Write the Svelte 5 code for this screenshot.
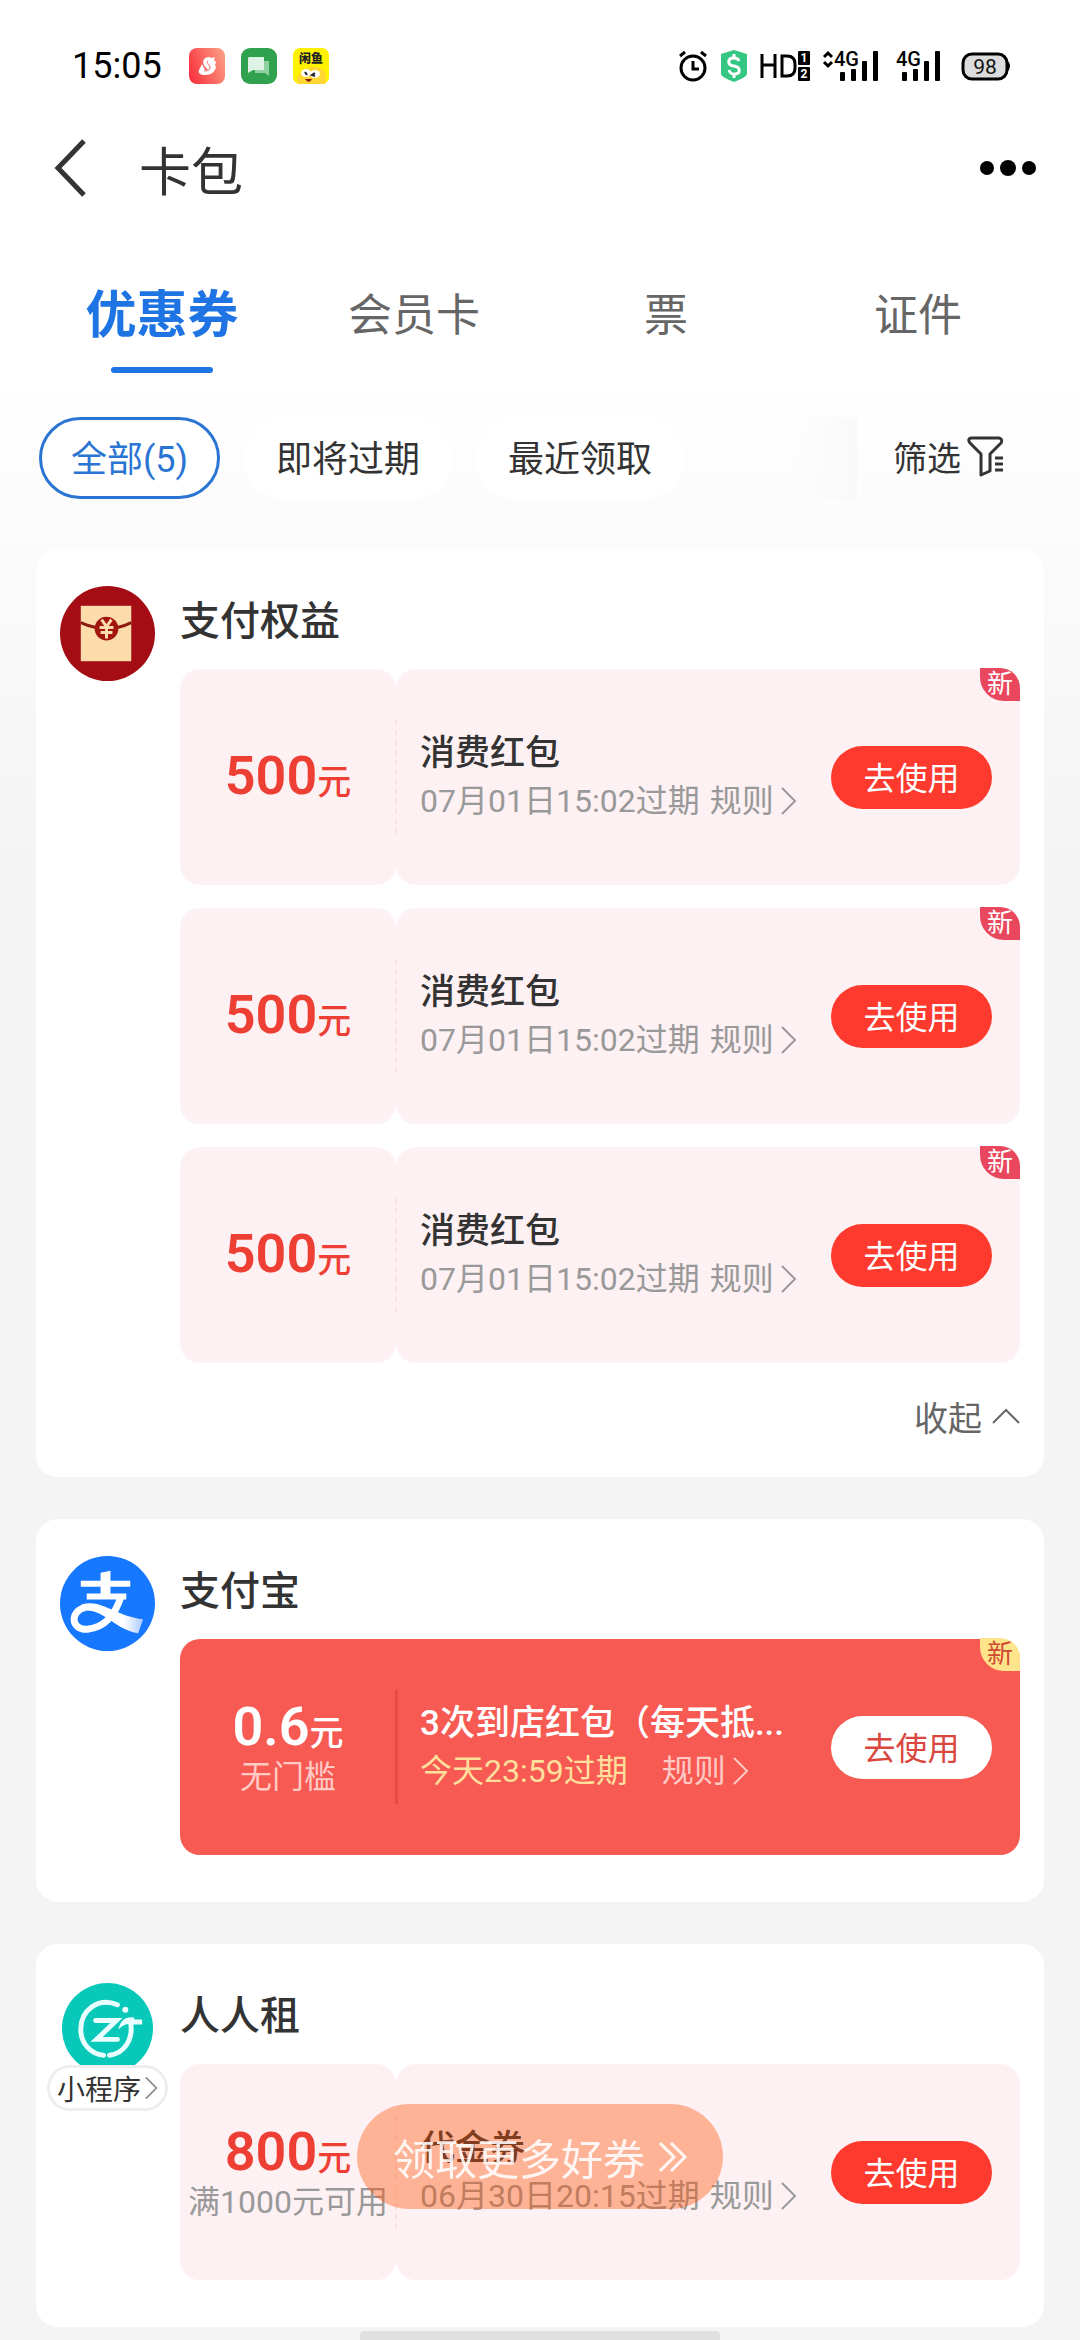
<script>
  const tabs = ['优惠券', '会员卡', '票', '证件'];
  const filters = ['全部(5)', '即将过期', '最近领取'];
  let activeTab = $state(0);
  let activeFilter = $state(0);

  const redPacket = {
    amount: '500',
    title: '消费红包',
    date: '07月01日15:02过期',
    isNew: true
  };

  const groups = [
    { icon: 'packet', name: '支付权益', fold: true, coupons: [redPacket, redPacket, redPacket] },
    {
      icon: 'alipay',
      name: '支付宝',
      coupons: [
        {
          amount: '0.6',
          limit: '无门槛',
          title: '3次到店红包（每天抵...',
          date: '今天23:59过期',
          isNew: true,
          solid: true
        }
      ]
    },
    {
      icon: 'rent',
      name: '人人租',
      mini: true,
      coupons: [{ amount: '800', limit: '满1000元可用', title: '代金券', date: '06月30日20:15过期' }]
    }
  ];
</script>

{#snippet signal(arrows)}
  <svg class="signal" width={arrows ? 56 : 44} height="36" viewBox={arrows ? '0 0 56 36' : '12 0 44 36'} aria-hidden="true">
    {#if arrows}
      <path d="M2 9l4-4 4 4M2 14l4 4 4-4" fill="none" stroke="#000" stroke-width="3" />
    {/if}
    <text x="12" y="18" font-size="20" font-weight="500" fill="#000">4G</text>
    <g fill="#000">
      <rect x="18" y="24" width="5" height="9" rx="1" />
      <rect x="29" y="21" width="5" height="12" rx="1" />
      <rect x="40" y="13" width="5" height="20" rx="1" />
      <rect x="51" y="3" width="5" height="30" rx="1" />
    </g>
  </svg>
{/snippet}

{#snippet avatar(kind)}
  <svg class="avatar" viewBox="0 0 96 96" aria-hidden="true">
    {#if kind === 'packet'}
      <circle cx="48" cy="48" r="48" fill="#a50d14" />
      <rect x="21" y="20" width="51" height="56" fill="#fbdcaa" />
      <path d="M21 37q27 12 51 0" fill="none" stroke="#8c1a10" stroke-width="3" />
      <circle cx="47" cy="43" r="12" fill="#a3160f" />
      <path d="M42 34l5 7 5-7M47 41v12M40 42h14M41 47h12" fill="none" stroke="#fbdcaa" stroke-width="3" />
    {:else if kind === 'alipay'}
      <defs>
        <linearGradient id="ribbon" x1="0" x2="1" y1="0" y2="0">
          <stop offset="0" stop-color="#fff" />
          <stop offset="0.7" stop-color="#fff" />
          <stop offset="1" stop-color="#a9cbff" />
        </linearGradient>
      </defs>
      <circle cx="48" cy="48" r="48" fill="#1677ff" />
      <path d="M41 17l10-2v25H41zM21 25h50v6H21zM27 38h40v6H27z" fill="#fff" />
      <path d="M62 40c-4 13-13 32-34 34-18 1-18-19-2-22" fill="none" stroke="#fff" stroke-width="7" />
      <path d="M22 49c20-6 34 12 62 15l-5 14C54 74 42 50 20 56z" fill="url(#ribbon)" />
    {:else}
      <circle cx="48" cy="48" r="46" fill="#07c8b9" />
      <g fill="none" stroke="#e9ffff" stroke-width="5" stroke-linecap="round" stroke-linejoin="round">
        <path d="M58 24c-20-8-37 6-37 25 0 14 10 25 23 26" />
        <path d="M50 75c15-2 25-16 21-35" />
        <path d="M36 40h21L37 59h21" stroke-linejoin="miter" />
      </g>
      <path d="M59 49q3-14 16-12v2h8v5h-9q-8-2-15 5z" fill="#e9ffff" />
      <circle cx="66" cy="29" r="3" fill="#e9ffff" />
    {/if}
  </svg>
{/snippet}

{#snippet chevron()}
  <svg class="chevron" width="16" height="28" viewBox="0 0 16 28" aria-hidden="true">
    <path d="M1 1l13 13L1 27" fill="none" stroke="currentColor" stroke-width="2" />
  </svg>
{/snippet}

<div class="page">
  <div class="status">
    <span class="time">15:05</span>
    <div class="apps">
      <svg width="36" height="36" viewBox="0 0 36 36" aria-hidden="true">
        <defs>
          <linearGradient id="swan" x1="0" x2="1" y1="0.7" y2="0.3">
            <stop offset="0" stop-color="#f93440" />
            <stop offset="1" stop-color="#fa9a80" />
          </linearGradient>
        </defs>
        <rect width="36" height="36" rx="8" fill="url(#swan)" />
        <path d="M17 20c-5-5-3-11 3-11l3 1 3-1-1 3 2 2-1 3 1 2c-1 5-5 8-11 8-5 0-7-2-6-5l3-6 3 6c3 1 4 0 1-2z" fill="#fff" />
        <path d="M19 13c-3 2 3 4 2 7s-4 3-6 3" fill="none" stroke="#f9666a" stroke-width="1" />
      </svg>
      <svg width="36" height="36" viewBox="0 0 36 36" aria-hidden="true">
        <rect width="36" height="36" rx="9" fill="#2fa14f" />
        <path d="M14 13h14v15l-4-3H14z" fill="#8fd0a0" />
        <path d="M8 9h15v13H12l-5 3V10z" fill="#dff3e4" />
      </svg>
      <svg width="36" height="36" viewBox="0 0 36 36" aria-hidden="true">
        <rect width="36" height="36" rx="7" fill="#fff200" />
        <path d="M6 36c-4-4-1-10 3-11 3-6 12-7 17-5 7 1 8 9 6 16z" fill="#ffd633" />
        <ellipse cx="13" cy="25" rx="5" ry="4" fill="#fff" />
        <ellipse cx="22" cy="26" rx="5" ry="4" fill="#fff" />
        <path d="M12 24l2 3M22 25l-3 2 3 1" stroke="#222" stroke-width="2" fill="none" />
        <path d="M12 31h7q-3 6-7 0z" fill="#8d1c12" />
        <text x="6" y="15" font-size="12" font-weight="900" fill="#222">闲鱼</text>
      </svg>
    </div>
    <div class="system">
      <svg width="30" height="34" viewBox="0 0 30 34" aria-hidden="true">
        <circle cx="15" cy="19" r="12" fill="none" stroke="#000" stroke-width="3" />
        <path d="M15 12v8h6M2 7l5-4M28 7l-5-4" fill="none" stroke="#000" stroke-width="3" />
      </svg>
      <svg width="28" height="34" viewBox="0 0 28 34" aria-hidden="true">
        <path d="M14 1l13 4v20q0 3-13 8Q1 28 1 25V5z" fill="#34c682" />
        <path d="M19 12q-1-3-5-3c-7 0-7 7 0 8s7 8 0 8q-4 0-5-4M14 5v4M14 25v4" fill="none" stroke="#fff" stroke-width="3" />
      </svg>
      <svg width="50" height="34" viewBox="0 0 50 34" aria-hidden="true">
        <path d="M2 5v24M15 5v24M2 16h13M22 7h5q8 0 8 8v4q0 8-8 8h-5z" fill="none" stroke="#000" stroke-width="3" />
        <rect x="38" y="2" width="12" height="14" rx="1" fill="#000" />
        <rect x="38" y="18" width="12" height="14" rx="1" fill="#000" />
        <text x="44" y="13" font-size="12" font-weight="700" text-anchor="middle" fill="#fff">1</text>
        <text x="44" y="29" font-size="12" font-weight="700" text-anchor="middle" fill="#fff">2</text>
      </svg>
      <div class="signals">
        {@render signal(true)}
        {@render signal(false)}
      </div>
      <svg width="52" height="34" viewBox="0 0 52 34" aria-hidden="true">
        <rect x="3" y="5" width="44" height="25" rx="9" fill="#dcdcdc" stroke="#000" stroke-width="3" />
        <path d="M48 12q4 5 0 10z" fill="#000" />
        <text x="25" y="25" font-size="21" text-anchor="middle" fill="#111">98</text>
      </svg>
    </div>
  </div>

  <header>
    <button class="plain" aria-label="返回">
      <svg width="40" height="60" viewBox="0 0 40 60" aria-hidden="true">
        <path d="M36 3L10 30l26 27" fill="none" stroke="#333" stroke-width="5" />
      </svg>
    </button>
    <h1>卡包</h1>
    <button class="plain more" aria-label="更多">
      <svg width="56" height="20" viewBox="0 0 56 20" aria-hidden="true">
        <circle cx="7" cy="10" r="7" /><circle cx="28" cy="10" r="8" /><circle cx="49" cy="10" r="7" />
      </svg>
    </button>
  </header>

  <nav class="tabs">
    {#each tabs as tab, i}
      <button class="plain tab" class:active={activeTab === i} onclick={() => (activeTab = i)}>{tab}</button>
    {/each}
  </nav>

  <div class="filters">
    {#each filters as filter, i}
      <button class="pill" class:active={activeFilter === i} onclick={() => (activeFilter = i)}>{filter}</button>
    {/each}
    <span class="fade"></span>
    <button class="plain sift">
      筛选
      <svg width="38" height="42" viewBox="0 0 38 42" aria-hidden="true">
        <path d="M4 2h28q4 1 2 5L23 18v17l-9 4V18L3 7Q0 3 4 2z" fill="none" stroke="#333" stroke-width="3" stroke-linejoin="round" />
        <path d="M28 22h8M28 28h8M28 34h8" stroke="#333" stroke-width="3" />
      </svg>
    </button>
  </div>

  <main>
    {#each groups as group}
      <section class="card">
        <div class="brand">
          {@render avatar(group.icon)}
          {#if group.mini}
            <button class="mini">小程序{@render chevron()}</button>
          {/if}
        </div>
        <div class="body">
          <h2>{group.name}</h2>
          <div class="list">
            {#each group.coupons as coupon}
              <article class="coupon" class:solid={coupon.solid}>
                <div class="value">
                  <p class="amount">{coupon.amount}<small>元</small></p>
                  {#if coupon.limit}<p class="limit">{coupon.limit}</p>{/if}
                </div>
                <div class="detail">
                  <div class="info">
                    <h3>{coupon.title}</h3>
                    <p class="meta">
                      <span class="date">{coupon.date}</span>
                      <button class="plain rule">规则{@render chevron()}</button>
                    </p>
                  </div>
                  <button class="use">去使用</button>
                </div>
                {#if coupon.isNew}<span class="badge">新</span>{/if}
              </article>
            {/each}
          </div>
          {#if group.fold}
            <button class="plain fold">
              收起
              <svg width="28" height="16" viewBox="0 0 28 16" aria-hidden="true">
                <path d="M1 15L14 2l13 13" fill="none" stroke="#666" stroke-width="2" />
              </svg>
            </button>
          {/if}
        </div>
      </section>
    {/each}
  </main>

  <button class="float">
    领取更多好券
    <svg width="28" height="30" viewBox="0 0 28 30" aria-hidden="true">
      <path d="M1 1l14 14L1 29M12 1l14 14-14 14" fill="none" stroke="currentColor" stroke-width="3" />
    </svg>
  </button>
  <div class="home"></div>
</div>

<style>
  :global(body) {
    margin: 0;
    background: #f4f4f4;
  }
  .page {
    min-height: 100vh;
    box-sizing: border-box;
    padding-bottom: 13px;
    overflow: hidden;
    background: linear-gradient(#fff 0, #fff 380px, #f4f4f4 860px);
    color: #333;
    font-family: Roboto, 'Noto Sans CJK SC', sans-serif;
  }
  h1, h2, h3, p {
    margin: 0;
    font-weight: 400;
  }
  button {
    padding: 0;
    border: 0;
    font-family: inherit;
    color: inherit;
    cursor: pointer;
  }
  svg {
    display: block;
    flex: none;
  }
  .plain {
    display: flex;
    align-items: center;
    background: none;
  }

  .status {
    display: flex;
    align-items: center;
    height: 60px;
    padding: 36px 68px 0 72px;
    color: #000;
  }
  .time {
    font-size: 36px;
  }
  .apps {
    display: flex;
    gap: 16px;
    margin-left: 27px;
  }
  .system {
    display: flex;
    align-items: center;
    gap: 12px;
    margin-left: auto;
  }
  .signals {
    display: flex;
    gap: 18px;
    padding-right: 8px;
  }

  header {
    display: flex;
    align-items: center;
    height: 144px;
    padding: 0 44px 0 48px;
  }
  h1 {
    margin-left: 51px;
    font-size: 52px;
  }
  .more {
    margin-left: auto;
  }

  .tabs {
    display: grid;
    grid-template-columns: repeat(4, 1fr);
    padding: 39px 36px 0;
  }
  .tab {
    flex-direction: column;
    gap: 14px;
    font-size: 44px;
    line-height: 74px;
    color: #666;
  }
  .tab::after {
    content: '';
    width: 102px;
    height: 6px;
    border-radius: 3px;
  }
  .tab.active {
    font-size: 51px;
    font-weight: 700;
    color: #1f74e4;
  }
  .tab.active::after {
    background: #1f74e4;
  }

  .filters {
    display: flex;
    align-items: stretch;
    gap: 24px;
    height: 82px;
    margin: 44px 75px 50px 39px;
  }
  .pill {
    padding: 0 29px 4px;
    border: 3px solid #fff;
    border-radius: 41px;
    background: #fff;
    font-size: 36px;
  }
  .pill.active {
    border-color: #2a75d3;
    color: #2a75d3;
  }
  .fade {
    width: 66px;
    margin-left: auto;
    background: linear-gradient(to right, #fdfdfd00, #f9f9f9);
  }
  .sift {
    gap: 6px;
    margin-left: 12px;
    padding-bottom: 3px;
    font-size: 34px;
  }

  main {
    display: flex;
    flex-direction: column;
    gap: 42px;
    padding: 0 36px;
  }
  .card {
    display: flex;
    gap: 12px;
    padding: 0 24px 47px 11px;
    border-radius: 22px;
    background: #fff;
  }
  .brand {
    display: flex;
    flex: none;
    flex-direction: column;
    align-items: center;
    width: 121px;
    padding-top: 37px;
  }
  .avatar {
    width: 95px;
    height: 95px;
  }
  .mini {
    display: flex;
    align-items: center;
    gap: 4px;
    height: 46px;
    margin-top: -11px;
    padding: 0 7px;
    border: 3px solid #eee;
    border-radius: 23px;
    background: #fff;
    box-sizing: border-box;
    font-size: 28px;
    white-space: nowrap;
    z-index: 1;
  }
  .mini .chevron {
    width: 13px;
    height: 24px;
    color: #888;
  }
  .body {
    flex: 1;
    min-width: 0;
  }
  h2 {
    height: 120px;
    font-size: 40px;
    font-weight: 500;
    line-height: 146px;
  }
  .list {
    display: flex;
    flex-direction: column;
    gap: 23px;
  }

  .coupon {
    position: relative;
    display: flex;
    height: 216px;
    border-radius: 20px;
  }
  .value,
  .detail {
    border-radius: 20px;
    background: #fef1f3;
  }
  .value {
    display: flex;
    flex: none;
    flex-direction: column;
    justify-content: center;
    align-items: center;
    width: 216px;
    color: #ee3f35;
  }
  .amount {
    padding-top: 4px;
    font-size: 54px;
    font-weight: 600;
    line-height: 50px;
  }
  small {
    font-size: 34px;
    font-weight: 500;
  }
  .limit {
    font-size: 32px;
    line-height: 38px;
    color: #999;
    white-space: nowrap;
  }
  .detail {
    position: relative;
    display: flex;
    flex: 1;
    align-items: center;
    min-width: 0;
    padding: 0 28px 0 24px;
  }
  .detail::before {
    content: '';
    position: absolute;
    top: 51px;
    bottom: 51px;
    left: -1px;
    border-left: 2px dashed #f9e3e6;
  }
  .info {
    flex: 1;
    min-width: 0;
    padding-right: 32px;
  }
  h3 {
    font-size: 35px;
    font-weight: 500;
    line-height: 48px;
    white-space: nowrap;
  }
  .meta {
    display: flex;
    align-items: baseline;
    gap: 10px;
    font-size: 32px;
    line-height: 46px;
    color: #999;
    white-space: nowrap;
  }
  .rule {
    gap: 7px;
    font-size: 32px;
    line-height: 46px;
  }
  .use {
    flex: none;
    width: 161px;
    height: 63px;
    padding-bottom: 3px;
    border-radius: 32px;
    background: #fe3a2e;
    color: #fff;
    font-size: 32px;
  }
  .badge {
    position: absolute;
    top: -1px;
    right: 0;
    width: 40px;
    border-radius: 0 20px 0 24px;
    background: #e8475d;
    color: #fff;
    font-size: 26px;
    line-height: 33px;
    text-align: center;
  }

  .solid {
    background: #f75a53;
  }
  .solid .value,
  .solid .detail {
    background: none;
    color: #fff;
  }
  .solid .detail::before {
    border-left: 3px solid #e64c46;
  }
  .solid .limit,
  .solid .rule {
    color: #ffc9c4;
  }
  .solid .meta {
    gap: 34px;
  }
  .solid .date {
    color: #ffdf9c;
  }
  .solid .use {
    background: #fff;
    color: #d9473f;
  }
  .solid .badge {
    background: #ffe48c;
    color: #cf4a33;
  }

  .fold {
    gap: 10px;
    height: 50px;
    margin: 28px 0 -11px auto;
    color: #666;
    font-size: 34px;
  }

  .float {
    position: fixed;
    bottom: 131px;
    left: 50%;
    z-index: 2;
    display: flex;
    justify-content: center;
    align-items: center;
    gap: 14px;
    height: 105px;
    padding: 0 36px;
    border-radius: 53px;
    background: rgb(255 80 0 / 38%);
    color: rgb(255 255 255 / 88%);
    font-size: 42px;
    white-space: nowrap;
    transform: translateX(-50%);
  }
  .home {
    position: fixed;
    bottom: 0;
    left: 33.33%;
    width: 33.33%;
    height: 9px;
    border-radius: 4px 4px 0 0;
    background: #e0e0e0;
  }
</style>
